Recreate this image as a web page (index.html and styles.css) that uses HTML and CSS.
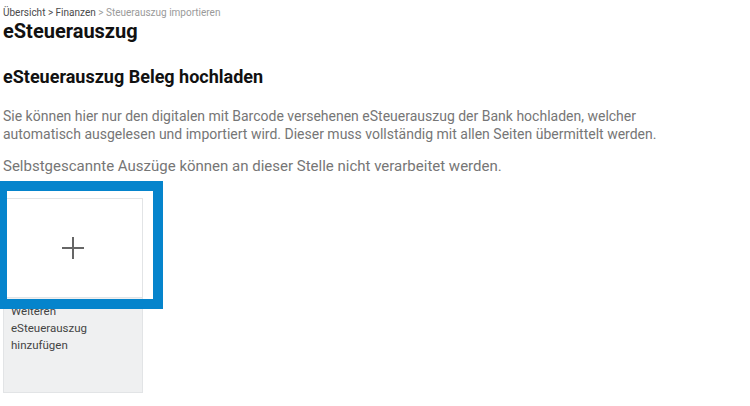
FILE: index.html
```html
<!DOCTYPE html>
<html lang="de">
<head>
<meta charset="utf-8">
<title>eSteuerauszug</title>
<link rel="stylesheet" href="styles.css">
</head>
<body>
<div class="page">
  <nav class="breadcrumb">
    <span class="crumb">Übersicht &gt; Finanzen</span> <span class="crumb current">&gt; Steuerauszug importieren</span>
  </nav>
  <h1 class="title">eSteuerauszug</h1>
  <h2 class="subtitle">eSteuerauszug Beleg hochladen</h2>
  <p class="text">Sie können hier nur den digitalen mit Barcode versehenen eSteuerauszug der Bank hochladen, welcher automatisch ausgelesen und importiert wird. Dieser muss vollständig mit allen Seiten übermittelt werden.</p>
  <p class="text text-second">Selbstgescannte Auszüge können an dieser Stelle nicht verarbeitet werden.</p>
  <div class="uploads">
    <div class="card">
      <div class="card-drop">
        <svg class="plus" width="24" height="24" viewBox="0 0 24 24"><path d="M12 1v22M1 12h22" stroke="#666" stroke-width="2" fill="none"/></svg>
      </div>
      <div class="card-label">Weiteren<br>eSteuerauszug<br>hinzufügen</div>
    </div>
    <div class="highlight"></div>
  </div>
</div>
</body>
</html>
```
FILE: styles.css
```css
html, body {
  margin: 0;
  padding: 0;
  background: #fff;
}
body {
  font-family: Roboto, "Liberation Sans", sans-serif;
  color: #111;
  overflow: hidden;
}
.page {
  padding: 7px 0 0 3px;
}
.breadcrumb {
  font-size: 10px;
  line-height: 12px;
  color: #4a4a4a;
}
.breadcrumb .current {
  color: #9a9a9a;
}
.title {
  margin: 0;
  font-size: 20px;
  line-height: 24px;
  font-weight: 700;
  color: #111;
}
.subtitle {
  margin: 23px 0 0;
  font-size: 18px;
  line-height: 22px;
  font-weight: 700;
  color: #111;
}
.text {
  margin: 19px 0 0;
  font-size: 14px;
  line-height: 18px;
  color: #767676;
  max-width: 690px;
}
.text-second {
  margin-top: 14px;
  font-size: 15px;
}
.uploads {
  position: relative;
  margin-top: 23px;
}
.card {
  width: 138px;
  height: 193px;
  border: 1px solid #e2e4e6;
  background: #eff0f1;
  display: flex;
  flex-direction: column;
}
.card-drop {
  height: 98px;
  flex: none;
  background: #fff;
  border-bottom: 1px solid #e2e4e6;
  display: flex;
  align-items: center;
  justify-content: center;
}
.card-label {
  padding: 5px 7px;
  font-size: 11.5px;
  line-height: 17px;
  color: #444;
}
.highlight {
  position: absolute;
  left: -6px;
  top: -17px;
  width: 146px;
  height: 108px;
  border: 10px solid #0584cc;
}
```
